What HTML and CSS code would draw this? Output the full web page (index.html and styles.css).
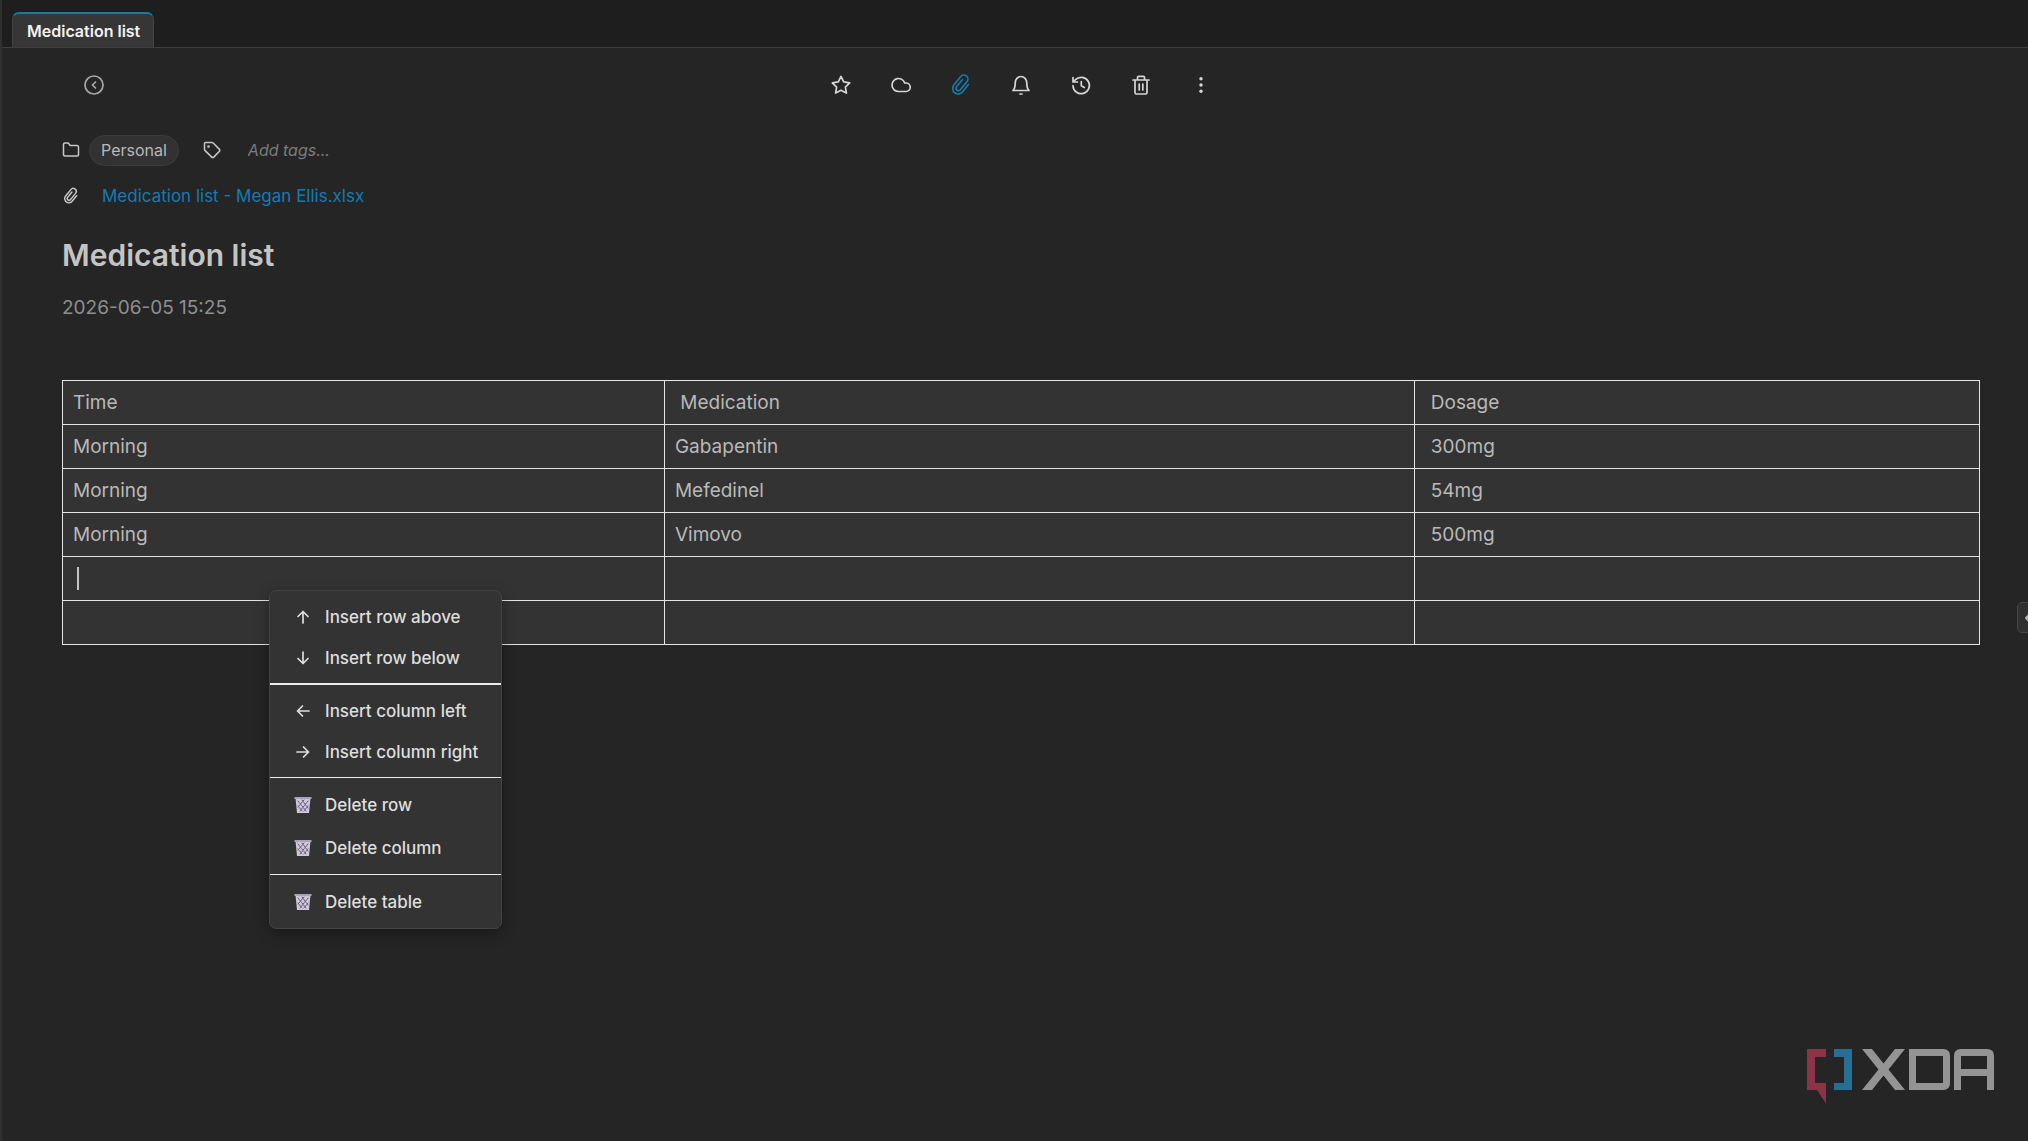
FILE: index.html
```html
<!DOCTYPE html>
<html lang="en">
<head>
<meta charset="utf-8">
<meta name="viewport" content="width=device-width, initial-scale=1">
<title>Medication list</title>
<link rel="stylesheet" href="styles.css">
</head>
<body>
<svg class="defs" aria-hidden="true">
  <symbol id="clip" viewBox="0 0 24 24"><path transform="rotate(39 12 12)" d="M17.500 7v9.500a5.500 5.500 0 0 1-11 0V5.500a4 4 0 0 1 8 0v10.700a2.400 2.400 0 0 1-4.800 0V7"/></symbol>
  <symbol id="arrow" viewBox="0 0 16 16"><path d="M8 14V2.500M3 7.500l5-5 5 5"/></symbol>
  <symbol id="basket" viewBox="0 0 18 18">
    <path d="M1.500 2h15L15 17H3z" fill="#cfc8dc"/>
    <path d="M.5 1h17v2H.5z" fill="#aaa4b5"/>
    <path d="M4 5l8 10M8 4l6 8M4 10l4 5M14 5L6 15M10 4l-6 7M14 10l-4 5" stroke="#655b78" stroke-width="1" stroke-dasharray="2 1" fill="none"/>
  </symbol>
</svg>

<div class="window">
  <header class="tabs" role="tablist">
    <button class="tab" role="tab" aria-selected="true">Medication list</button>
  </header>

  <main class="note">
    <nav class="toolbar" aria-label="Note actions">
      <button class="icon-button back" aria-label="Back"><svg class="icon" viewBox="0 0 24 24"><circle cx="12" cy="12" r="9"/><path d="M13.500 9l-3 3 3 3"/></svg></button>
      <div class="actions">
        <button class="icon-button" aria-label="Favorite"><svg class="icon" viewBox="0 0 24 24"><path d="M12 3.400l2.700 5.500 6 .9-4.300 4.300 1 6-5.400-2.800-5.400 2.800 1-6L3.300 9.800l6-.9z"/></svg></button>
        <button class="icon-button" aria-label="Sync"><svg class="icon" viewBox="0 0 24 24"><path d="M17 18.500H9.500a6.500 6.500 0 1 1 6.200-8.500H17a4.250 4.250 0 0 1 0 8.500z"/></svg></button>
        <button class="icon-button active" aria-label="Attachments"><svg class="icon"><use href="#clip"/></svg></button>
        <button class="icon-button" aria-label="Reminder"><svg class="icon" viewBox="0 0 24 24"><path d="M4 17.500c1.800-1.800 2.200-4 2.200-7.500a5.800 6.500 0 0 1 11.600 0c0 3.500.4 5.700 2.200 7.500zM11 21h2"/></svg></button>
        <button class="icon-button" aria-label="History"><svg class="icon" viewBox="0 0 24 24"><path d="M4 12.500A8.200 8.200 0 1 0 6.500 6.600L4 9M4 4.500V9h4.500M12.300 8.500v4.300l3 1.700"/></svg></button>
        <button class="icon-button" aria-label="Delete"><svg class="icon" viewBox="0 0 24 24"><path d="M4 7h16M6 7v12.500a1.500 1.500 0 0 0 1.500 1.500h9a1.500 1.500 0 0 0 1.500-1.500V7M8.500 7V4.500A1.200 1.200 0 0 1 9.700 3.300h4.600a1.200 1.200 0 0 1 1.200 1.200V7M10.200 11v6M13.800 11v6"/></svg></button>
        <button class="icon-button" aria-label="More"><svg class="icon dots" viewBox="0 0 24 24"><circle cx="12" cy="5.800" r="1.700"/><circle cx="12" cy="12" r="1.700"/><circle cx="12" cy="18.200" r="1.700"/></svg></button>
      </div>
    </nav>

    <div class="meta">
      <svg class="small-icon" viewBox="0 0 18 18" aria-hidden="true"><path d="M1.500 13.500v-10A1.500 1.500 0 0 1 3 2h3.200l2 2.500H15A1.500 1.500 0 0 1 16.500 6v7.500A1.500 1.500 0 0 1 15 15H3a1.500 1.500 0 0 1-1.500-1.500z"/></svg>
      <button class="notebook">Personal</button>
      <label class="tag-label" for="tags" aria-label="Tags"><svg class="small-icon" viewBox="0 0 18 18"><path d="M1.500 2.500a1 1 0 0 1 1-1h6.300a2 2 0 0 1 1.400.6l6 6a1.800 1.800 0 0 1 0 2.500l-5.200 5.300a1.800 1.800 0 0 1-2.500 0L2.100 9.600a2 2 0 0 1-.6-1.400z"/><circle cx="5.500" cy="5.500" r=".6"/></svg></label>
      <input class="tags" id="tags" type="text" placeholder="Add tags...">
    </div>
    <div class="attachment">
      <svg class="small-icon" aria-hidden="true"><use href="#clip"/></svg>
      <a href="#attachment">Medication list - Megan Ellis.xlsx</a>
    </div>

    <h1 class="title">Medication list</h1>
    <time class="date" datetime="2026-06-05T15:25">2026-06-05 15:25</time>

    <table class="grid">
      <colgroup><col class="col-time"><col class="col-med"><col class="col-dose"></colgroup>
      <tbody>
        <tr><td>Time</td><td>&nbsp;Medication</td><td>&nbsp;Dosage</td></tr>
        <tr><td>Morning</td><td>Gabapentin</td><td>&nbsp;300mg</td></tr>
        <tr><td>Morning</td><td>Mefedinel</td><td>&nbsp;54mg</td></tr>
        <tr><td>Morning</td><td>Vimovo</td><td>&nbsp;500mg</td></tr>
        <tr><td><span class="caret"></span></td><td></td><td></td></tr>
        <tr><td></td><td></td><td></td></tr>
      </tbody>
    </table>
  </main>

  <div class="menu" role="menu">
    <button class="item" role="menuitem"><svg class="menu-icon"><use href="#arrow"/></svg>Insert row above</button>
    <button class="item" role="menuitem"><svg class="menu-icon down"><use href="#arrow"/></svg>Insert row below</button>
    <hr class="rule thick">
    <button class="item" role="menuitem"><svg class="menu-icon left"><use href="#arrow"/></svg>Insert column left</button>
    <button class="item" role="menuitem"><svg class="menu-icon right"><use href="#arrow"/></svg>Insert column right</button>
    <hr class="rule">
    <button class="item tall" role="menuitem"><svg class="menu-icon basket"><use href="#basket"/></svg>Delete row</button>
    <button class="item tall" role="menuitem"><svg class="menu-icon basket"><use href="#basket"/></svg>Delete column</button>
    <hr class="rule">
    <button class="item tall" role="menuitem"><svg class="menu-icon basket"><use href="#basket"/></svg>Delete table</button>
  </div>

  <button class="handle" aria-label="Show side panel"><svg viewBox="0 0 8 12"><path d="M6 2L2 6l4 4"/></svg></button>

  <svg class="logo" viewBox="0 0 188 56" role="img" aria-label="XDA">
    <path fill="#8b3448" d="M0 0h19v8H8v26h11v20.500L10 41H0z"/>
    <path fill="#286e94" d="M27 0h18v41H27v-7h10V8H27z"/>
    <path fill="#949494" fill-rule="evenodd" d="M55 0h10l11.500 14.500L88 0h10L81.500 20.500 98 41H88L76.500 26.500 65 41H55l16.500-20.500zM102 0h34q7 0 7 7v27q0 7-7 7h-34zm7 7v27h27V7zM147 41V7q0-7 7-7h26q7 0 7 7v34h-7V27h-26v14zm7-34v13h26V7z"/>
  </svg>
</div>
</body>
</html>
```
FILE: styles.css
```css
* {
  box-sizing: border-box;
}

body {
  margin: 0;
  background: #252525;
  color: #b9b9b9;
  font: 19px/24px Inter, "Liberation Sans", sans-serif;
}

button,
input {
  margin: 0;
  padding: 0;
  border: 0;
  background: none;
  color: inherit;
  font: inherit;
}

svg {
  display: block;
  flex: none;
  fill: none;
  stroke: currentColor;
  stroke-linecap: round;
  stroke-linejoin: round;
}

.defs {
  position: absolute;
  width: 0;
  height: 0;
}

.window {
  position: relative;
  min-height: 100vh;
  border-left: 2px solid #303030;
  overflow: hidden;
}

.tabs {
  display: flex;
  align-items: flex-end;
  height: 48px;
  padding-left: 10px;
  border-bottom: 1px solid #3c3f41;
  background: #1e1e1e;
}

.tab {
  height: 35px;
  padding: 0 13px 0 14px;
  border: 1px solid #454545;
  border-top: 2px solid #147aa8;
  border-bottom: 0;
  border-radius: 7px 7px 0 0;
  background: #363636;
  color: #f2f2f2;
  font-size: 16px;
  font-weight: 600;
}

.note {
  padding: 19px 48px 60px 60px;
}

.toolbar {
  display: grid;
  grid-template-columns: 1fr auto 1fr;
  align-items: center;
  height: 36px;
  color: #d6d6d6;
}

.icon-button {
  display: grid;
  place-items: center;
  width: 36px;
  height: 36px;
}

.back {
  margin-left: 14px;
  color: #a9a9a9;
}

.actions {
  display: flex;
  gap: 24px;
}

.active {
  color: #147cad;
}

.icon {
  width: 24px;
  height: 24px;
  stroke-width: 1.7;
}

.dots {
  fill: currentColor;
  stroke: none;
}

.meta {
  display: flex;
  align-items: center;
  margin-top: 31px;
  height: 32px;
}

.small-icon {
  width: 18px;
  height: 18px;
  stroke-width: 1.5;
  color: #c8c8c8;
}

.notebook {
  height: 31px;
  margin-left: 9px;
  padding: 0 11px;
  border: 1px solid #3c3c3c;
  border-radius: 16px;
  background: #323232;
  font-size: 16px;
}

.tag-label {
  margin-left: 24px;
}

.tags {
  width: 200px;
  margin-left: 27px;
  font-size: 16px;
  font-style: italic;
}

.tags::placeholder {
  color: #7d7d7d;
  opacity: 1;
}

.attachment {
  display: flex;
  align-items: center;
  gap: 22px;
  height: 24px;
  margin-top: 18px;
  font-size: 17px;
}

.attachment .small-icon {
  stroke-width: 2;
}

.attachment a {
  color: #137bb3;
  text-decoration: none;
}

.title {
  margin: 27px 0 0;
  color: #c4c4c4;
  font-size: 30px;
  line-height: 40px;
  font-weight: 600;
}

.date {
  display: block;
  margin-top: 21px;
  color: #8f8f8f;
}

.grid {
  width: 100%;
  margin-top: 60px;
  border-collapse: collapse;
  table-layout: fixed;
  background: #333;
}

.col-time {
  width: 31.4%;
}

.col-med {
  width: 39.15%;
}

.grid td {
  height: 44px;
  padding: 0 10px;
  border: 1px solid #e4e4e4;
}

.caret {
  display: block;
  width: 2px;
  height: 23px;
  margin-left: 4px;
  background: #c4c4c4;
}

.menu {
  position: absolute;
  top: 590px;
  left: 267px;
  width: 233px;
  padding: 5px 0;
  border: 1px solid #434343;
  border-radius: 7px;
  background: #333;
  box-shadow: 0 4px 14px rgba(0, 0, 0, .35);
  color: #dedede;
}

.item {
  display: flex;
  align-items: center;
  gap: 14px;
  width: 100%;
  height: 41px;
  padding-left: 25px;
  font-size: 17px;
  font-weight: 500;
}

.tall {
  height: 43px;
}

.rule {
  height: 1px;
  margin: 5px 0;
  border: 0;
  background: #ececec;
}

.thick {
  height: 2px;
}

.menu-icon {
  width: 16px;
  height: 16px;
  stroke-width: 1.7;
}

.down {
  transform: rotate(180deg);
}

.left {
  transform: rotate(-90deg);
}

.right {
  transform: rotate(90deg);
}

.basket {
  width: 18px;
  height: 18px;
  margin: 0 -1px;
  stroke: none;
}

.handle {
  position: absolute;
  top: 602px;
  right: -6px;
  width: 17px;
  height: 31px;
  padding-left: 6px;
  border: 1px solid #454545;
  border-radius: 5px;
  background: #303030;
}

.handle svg {
  width: 8px;
  height: 12px;
  stroke-width: 2;
}

.logo {
  position: absolute;
  right: 33px;
  bottom: 36px;
  width: 188px;
  height: 56px;
  stroke: none;
}
```
